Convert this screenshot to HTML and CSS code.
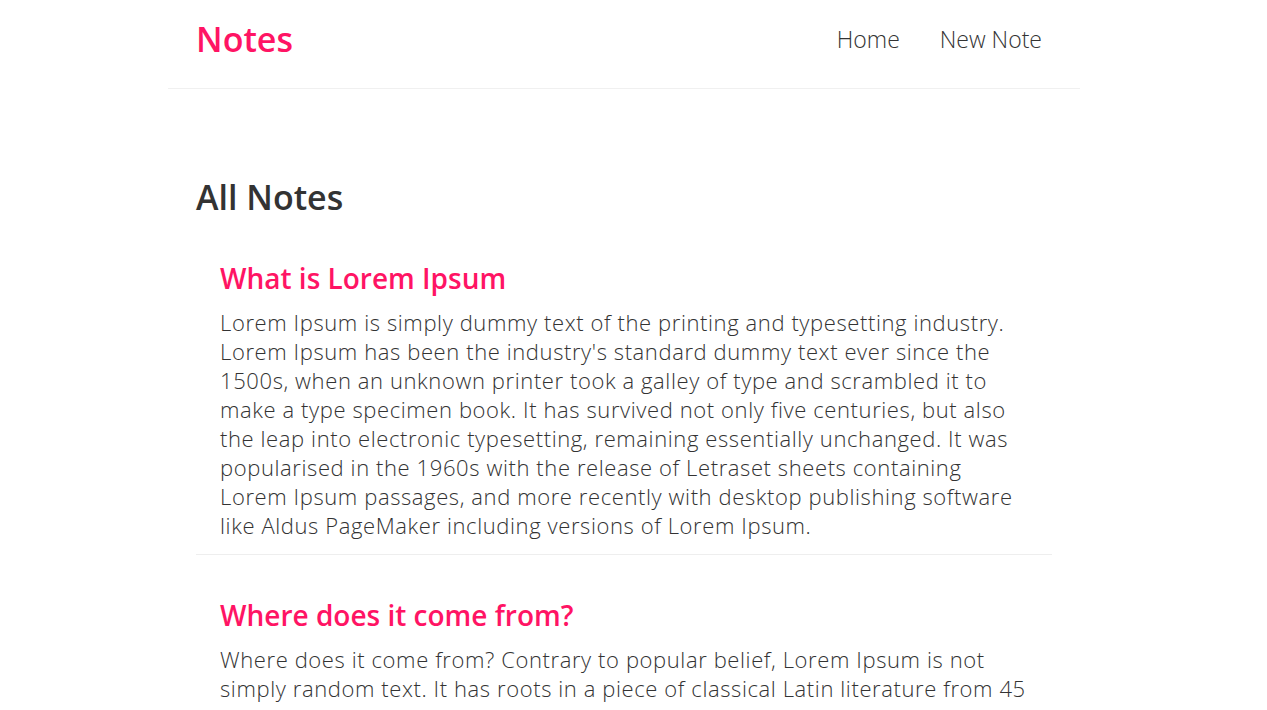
FILE: index.html
```html
<!DOCTYPE html>
<html lang="en">
<head>
<meta charset="utf-8">
<title>Notes</title>
<link rel="stylesheet" href="styles.css">
</head>
<body>
<header class="navbar">
  <a class="brand" href="#">Notes</a>
  <nav class="links">
    <a href="#">Home</a>
    <a href="#">New Note</a>
  </nav>
</header>
<main class="content">
  <h2 class="page-title">All Notes</h2>
  <article class="note">
    <h3 class="note-title">What is Lorem Ipsum</h3>
    <p class="note-body">Lorem Ipsum is simply dummy text of the printing and typesetting industry. Lorem Ipsum has been the industry's standard dummy text ever since the 1500s, when an unknown printer took a galley of type and scrambled it to make a type specimen book. It has survived not only five centuries, but also the leap into electronic typesetting, remaining essentially unchanged. It was popularised in the 1960s with the release of Letraset sheets containing Lorem Ipsum passages, and more recently with desktop publishing software like Aldus PageMaker including versions of Lorem Ipsum.</p>
  </article>
  <article class="note">
    <h3 class="note-title">Where does it come from?</h3>
    <p class="note-body">Where does it come from? Contrary to popular belief, Lorem Ipsum is not simply random text. It has roots in a piece of classical Latin literature from 45 BC, making it over 2000 years old. Richard McClintock, a Latin professor at Hampden-Sydney College in Virginia, looked up one of the more obscure Latin words.</p>
  </article>
</main>
</body>
</html>
```
FILE: styles.css
```css
* { box-sizing: border-box; }
body {
  margin: 0;
  padding-right: 19px;
  font-family: "Open Sans", "Noto Sans", sans-serif;
  color: #333;
  background: #fff;
}
a { text-decoration: none; }
.navbar {
  width: 912px;
  margin: 0 auto;
  height: 89px;
  display: flex;
  align-items: center;
  justify-content: space-between;
  padding: 0 18px 10px 28px;
  border-bottom: 1px solid #f0f0f0;
}
.brand {
  color: #ff1464;
  font-size: 34px;
  font-weight: 600;
}
.links { display: flex; }
.links a {
  color: #333;
  font-size: 23px;
  font-weight: 300;
  padding: 0 20px;
}
.content {
  width: 856px;
  margin: 0 auto;
  padding-top: 88px;
}
.page-title {
  margin: 0 0 43px;
  font-size: 34px;
  font-weight: 600;
  color: #333;
  line-height: 40px;
}
.note {
  padding: 0 24px 14px;
  border-bottom: 1px solid #eee;
  margin-bottom: 42px;
}
.note-title {
  margin: 0 0 12px;
  color: #ff1464;
  font-size: 28px;
  font-weight: 600;
  line-height: 36px;
}
.note-body {
  margin: 0;
  font-size: 22px;
  font-weight: 300;
  letter-spacing: 0.6px;
  line-height: 29px;
  color: #333;
}
```
